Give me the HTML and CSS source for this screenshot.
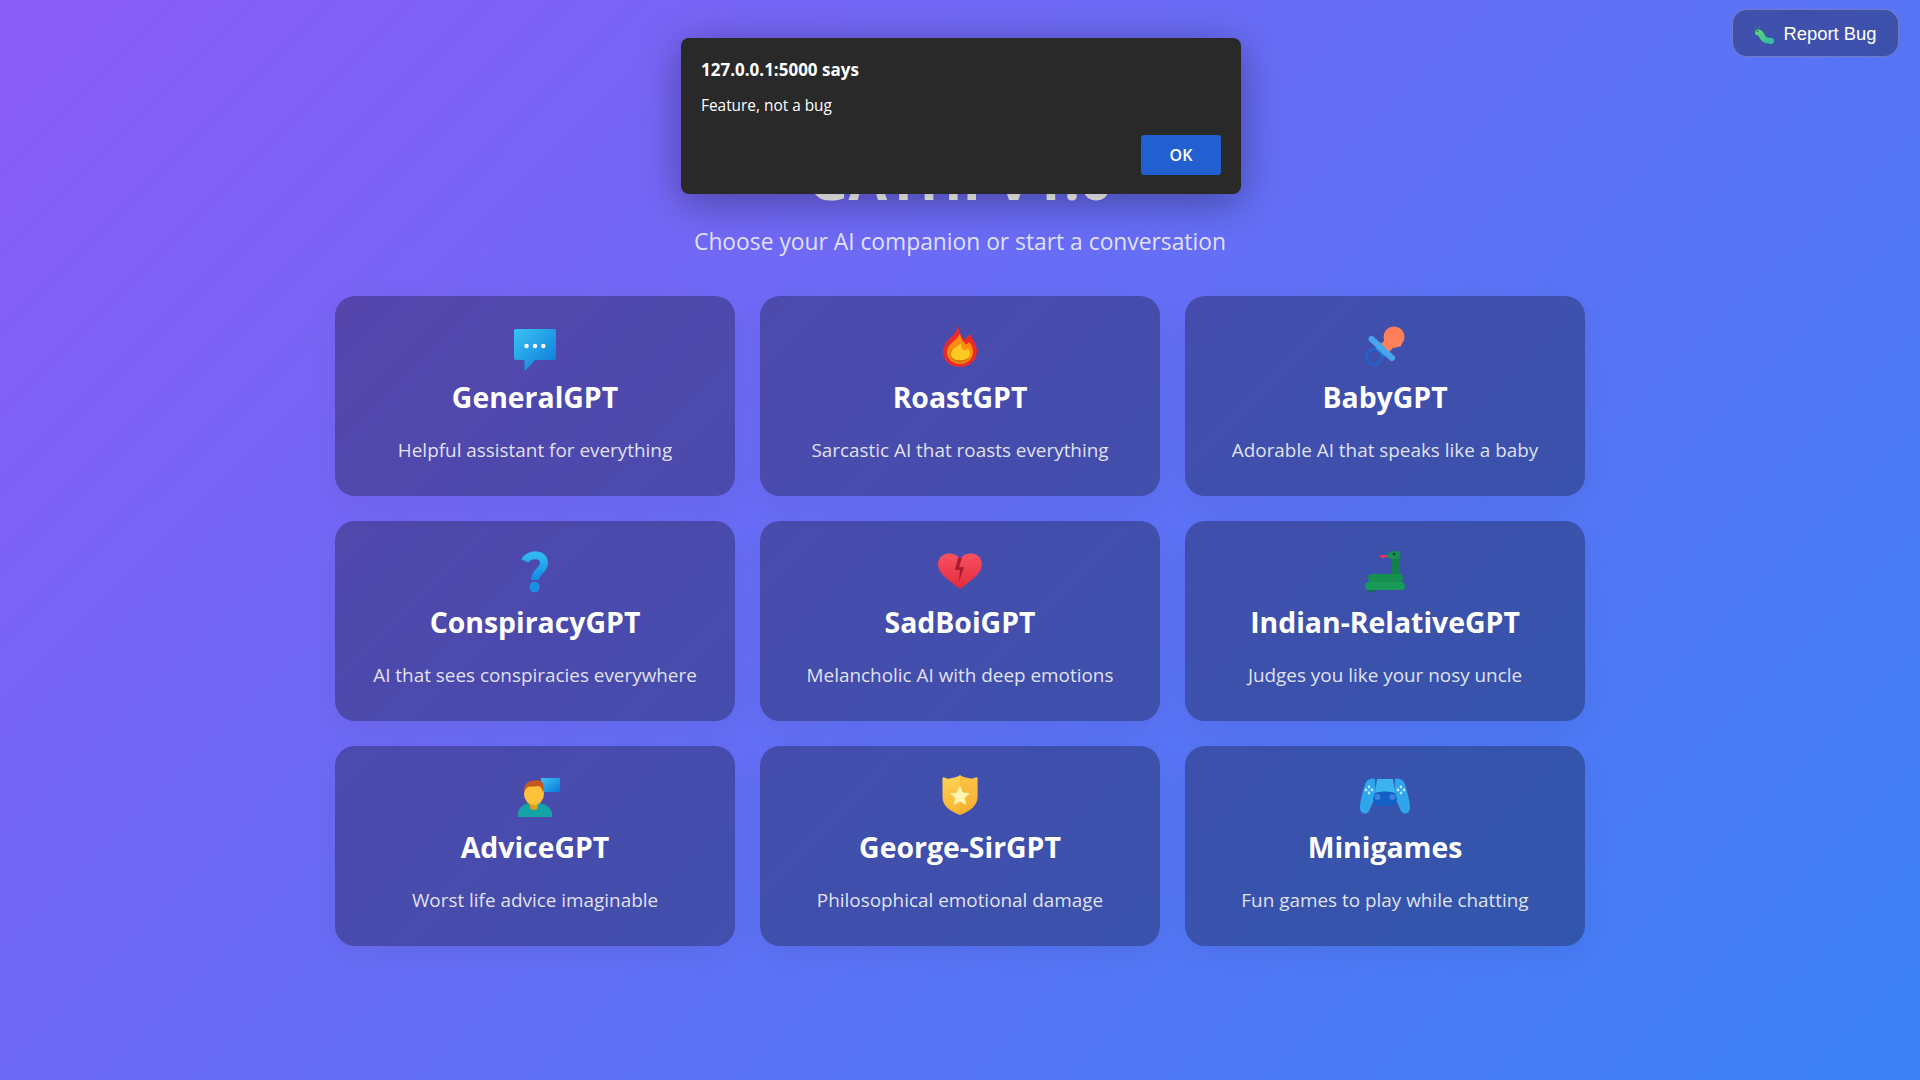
FILE: index.html
```html
<!DOCTYPE html>
<html lang="en">
<head>
<meta charset="utf-8">
<title>GATHI V1.0</title>
<link rel="stylesheet" href="styles.css">
</head>
<body>
<svg class="defs" width="0" height="0" aria-hidden="true">
<defs>
<linearGradient id="gBlue" x1="0" y1="0" x2="1" y2="1"><stop offset="0" stop-color="#3bc3f3"/><stop offset="1" stop-color="#0a78d8"/></linearGradient>
<linearGradient id="gQ" x1="0" y1="0" x2="0" y2="1"><stop offset="0" stop-color="#2fb9f0"/><stop offset="1" stop-color="#1488e0"/></linearGradient>
<linearGradient id="gHeart" x1="0" y1="0" x2="0" y2="1"><stop offset="0" stop-color="#f8515f"/><stop offset="1" stop-color="#e32a3e"/></linearGradient>
<linearGradient id="gShield" x1="0" y1="0" x2="0" y2="1"><stop offset="0" stop-color="#ffd254"/><stop offset="1" stop-color="#f9b432"/></linearGradient>
<linearGradient id="gBug" x1="0" y1="0" x2="1" y2="1"><stop offset="0" stop-color="#5bd17c"/><stop offset="1" stop-color="#2fbf9c"/></linearGradient>
</defs>
</svg>

<button class="report-btn" type="button">
<svg class="bug-icon" viewBox="0 0 20 18"><path d="M1 0l2 3M6 0l-1 3" stroke="#1f8f5a" stroke-width="1" fill="none"/><path d="M4 6.500c4 0 3 4 6 6.500s5 1.500 7 2" stroke="url(#gBug)" stroke-width="6" stroke-linecap="round" fill="none"/><circle cx="3.500" cy="5.500" r="0.800" fill="#1b5e3c"/></svg>
<span>Report Bug</span>
</button>

<div class="alert" role="alertdialog">
<div class="alert-title">127.0.0.1:5000 says</div>
<div class="alert-msg">Feature, not a bug</div>
<div class="alert-actions"><button class="alert-ok" type="button">OK</button></div>
</div>

<main class="page">
<header class="hero">
<h1 class="hero-title">GATHI V1.0</h1>
<p class="hero-sub">Choose your AI companion or start a conversation</p>
</header>
<section class="grid">

<article class="card">
<svg class="emoji" viewBox="0 0 48 48"><path d="M5 3h38a2 2 0 0 1 2 2v27a2 2 0 0 1-2 2H24L14.500 44.500a.6.6 0 0 1-1-.4V34H5a2 2 0 0 1-2-2V5a2 2 0 0 1 2-2z" fill="url(#gBlue)"/><circle cx="15.500" cy="20" r="2.200" fill="#fff"/><circle cx="24" cy="20" r="2.200" fill="#fff"/><circle cx="32.300" cy="20" r="2.200" fill="#fff"/></svg>
<h2 class="card-title">GeneralGPT</h2>
<p class="card-desc">Helpful assistant for everything</p>
</article>

<article class="card">
<svg class="emoji" viewBox="0 0 48 48"><path d="M22 0c2 6 2 9 6 13 1 1 2 0 2-1l3-3 1-1c3 6 7 11 7 17 0 10-8 16-17 16S7 35 7 26c0-5 3-9 6-13 4-4 8-7 9-13z" fill="#e82a2a"/><path d="M24 8c1 5 3 8 6 10 1 .6 2-.6 3-2 3 3 4 7 4 10 0 7-6 12-13 12S11 33 11 26c0-8 9-11 13-18z" fill="#ff8b12"/><path d="M25 17c0 3 1 6 3 7 2 .8 3-1 4-2 1 2 2 3 2 6 0 5-4 9-10 9s-10-4-10-9c0-6 8-7 11-11z" fill="#b96f00" opacity=".6"/><path d="M25 17c0 3 1 6 3 7 2 .8 3-1 4-2 1 2 2 3 2 6 0 4-4 6-10 6s-9-2-9-6c0-6 7-7 10-11z" fill="#fdc921"/></svg>
<h2 class="card-title">RoastGPT</h2>
<p class="card-desc">Sarcastic AI that roasts everything</p>
</article>

<article class="card">
<svg class="emoji" viewBox="0 0 48 48"><circle cx="13" cy="31" r="7.500" fill="none" stroke="#1f66cc" stroke-width="2.500"/><path d="M14 22l6-6 9 9-6 6z" fill="#2e84dc"/><path d="M25 7l16 13-9 2-6 6-8-8 6-6z" fill="#ff8058"/><circle cx="33" cy="11" r="10.500" fill="#ff8058"/><path d="M10.500 13L31 32" stroke="#4aa5ef" stroke-width="6" stroke-linecap="round"/></svg>
<h2 class="card-title">BabyGPT</h2>
<p class="card-desc">Adorable AI that speaks like a baby</p>
</article>

<article class="card">
<svg class="emoji" viewBox="0 0 48 48"><path d="M14 10c3-7 19-9 19 2 0 8-9 8-9 17" fill="none" stroke="url(#gQ)" stroke-width="8" stroke-linejoin="round"/><circle cx="23.500" cy="36" r="5.200" fill="#1a8fe3"/></svg>
<h2 class="card-title">ConspiracyGPT</h2>
<p class="card-desc">AI that sees conspiracies everywhere</p>
</article>

<article class="card">
<svg class="emoji" viewBox="0 0 48 48"><path d="M24 38C12 29 2 22 2 13.500 2 7 7 2.500 13 2.500c5 0 9 2 11 6 2-4 6-6 11-6 6 0 11 4.500 11 11C46 22 36 29 24 38z" fill="url(#gHeart)"/><path d="M22 7l-3 12h5l-1 12 5-15h-5l3-9z" fill="#a81b30"/></svg>
<h2 class="card-title">SadBoiGPT</h2>
<p class="card-desc">Melancholic AI with deep emotions</p>
</article>

<article class="card">
<svg class="emoji" viewBox="0 0 48 48"><path d="M19 4h8v2l-4 .5-1 2-1-2-2-.5z" fill="#d63a5e"/><path d="M34.500 25V6" stroke="#12804a" stroke-width="8" fill="none"/><path d="M26 4C28 0 36-1 38.500 1c2 2 1 6-1 7h-6c-3 0-6-1-5.500-4z" fill="#169054"/><circle cx="33" cy="3" r="1.300" fill="#10482c"/><rect x="7" y="23" width="35" height="8" rx="4" fill="#15904f"/><path d="M10 38l-5 3.500 10-1.500z" fill="#0e7040"/><rect x="4" y="31" width="40" height="8" rx="4" fill="#1a9a58"/></svg>
<h2 class="card-title">Indian-RelativeGPT</h2>
<p class="card-desc">Judges you like your nosy uncle</p>
</article>

<article class="card">
<svg class="emoji" viewBox="0 0 48 48"><path d="M30 2h18a1 1 0 0 1 1 1v12a1 1 0 0 1-1 1H30z" fill="url(#gBlue)"/><path d="M7 41v-3c0-6 6-11 12-11h8c7 0 14 5 14 11v3z" fill="#16a3a5"/><path d="M19 24h8v6a4 4 0 0 1-8 0z" fill="#e89a1c"/><ellipse cx="23" cy="18" rx="10" ry="11" fill="#fdc13a"/><path d="M13 16c0-7 3-11 8-11 4-1.500 9-1 10 1 2 3 2 6 1 10-1-3-2-6-5-6-3 1-8 0-10 1-2 1-3 3-4 5z" fill="#c8561f"/></svg>
<h2 class="card-title">AdviceGPT</h2>
<p class="card-desc">Worst life advice imaginable</p>
</article>

<article class="card">
<svg class="emoji" viewBox="0 0 48 48"><path d="M8 1c2 2 5 2 8 1 3-.5 6-1 8-3 2 2 5 2.500 8 3 3 1 6 1 8-1 1 0 1.500 1 1.500 2v18c0 9-8 14-17.500 18C14 35 6.500 30 6.500 21V3c0-1 .5-2 1.500-2z" fill="url(#gShield)"/><path d="M24-1c2 2 5 2.500 8 3 3 1 6 1 8-1 1 0 1.500 1 1.500 2v18c0 9-8 14-17.500 18z" fill="#f3a72a" opacity=".35"/><path d="M24 10l3 6.500 7 .8-5.200 4.800 1.400 7L24 25.500l-6.200 3.600 1.400-7L14 17.300l7-.8z" fill="#fff3b0"/></svg>
<h2 class="card-title">George-SirGPT</h2>
<p class="card-desc">Philosophical emotional damage</p>
</article>

<article class="card">
<svg class="emoji" viewBox="0 0 48 48"><path d="M13 2.500c-5 0-8 2-9 6-2 6-5 17-5 23 0 5 3 6 5 6 3 0 4-2 6-7 1-3 4-7 5-12l-1-14c0-1 0-2-1-2z" fill="#2ea6ec"/><path d="M35 2.500c5 0 8 2 9 6 2 6 5 17 5 23 0 5-3 6-5 6-3 0-4-2-6-7-1-3-4-7-5-12l1-14c0-1 0-2 1-2z" fill="#2ea6ec"/><path d="M16 3h16l2 14H14z" fill="#3bb4f0"/><path d="M14 17c6-2 14-2 20 0l2 6-3 7H15l-3-7z" fill="#1560c4"/><circle cx="16.500" cy="21" r="2.900" fill="#3e83dc"/><circle cx="31.500" cy="21" r="2.900" fill="#3e83dc"/><g fill="#bfe6fb"><circle cx="8" cy="11" r="1.400"/><circle cx="5" cy="14" r="1.400"/><circle cx="11" cy="14" r="1.400"/><circle cx="8" cy="17" r="1.400"/><circle cx="40" cy="11" r="1.400"/><circle cx="37" cy="14" r="1.400"/><circle cx="43" cy="14" r="1.400"/><circle cx="40" cy="17" r="1.400"/></g></svg>
<h2 class="card-title">Minigames</h2>
<p class="card-desc">Fun games to play while chatting</p>
</article>

</section>
</main>
</body>
</html>
```
FILE: styles.css
```css
* { box-sizing: border-box; }
html, body { margin: 0; height: 100%; }
body {
  min-height: 100vh;
  overflow: hidden;
  background: linear-gradient(135deg, #8b5cf6 0%, #3b82f6 100%);
  font-family: "Open Sans", "Noto Sans", sans-serif;
  color: #fff;
}
.defs { position: absolute; }
.page {
  display: flex;
  flex-direction: column;
  align-items: center;
  padding-top: 140px;
}
.hero { text-align: center; margin-bottom: 39px; }
.hero-title {
  margin: 0;
  font-size: 56px;
  line-height: 76px;
  font-weight: 700;
  color: #fff;
}
.hero-sub {
  margin: 11px 0 0;
  font-size: 22.800px;
  line-height: 30px;
  color: rgba(255,255,255,.82);
}
.grid {
  display: grid;
  grid-template-columns: repeat(3, 400px);
  grid-auto-rows: 200px;
  gap: 25px;
}
.card {
  display: flex;
  flex-direction: column;
  align-items: center;
  padding-top: 30px;
  border-radius: 20px;
  background: rgba(0,0,0,.3);
  box-shadow: 0 8px 32px rgba(0,0,0,.06);
}
.emoji { width: 48px; height: 48px; overflow: visible; display: block; flex: none; }
.card-title {
  margin: 3.500px 0 0;
  font-size: 28.400px;
  line-height: 38px;
  font-weight: 700;
}
.card-desc {
  margin: 21px 0 0;
  font-size: 18.900px;
  line-height: 26px;
  color: rgba(255,255,255,.85);
}
.report-btn {
  position: absolute;
  top: 9px;
  right: 21px;
  width: 167px;
  height: 48px;
  display: flex;
  align-items: center;
  justify-content: center;
  gap: 9px;
  padding: 1px 0 0;
  border: 1px solid rgba(255,255,255,.25);
  border-radius: 15px;
  background: rgba(0,0,0,.3);
  color: #fff;
  font-family: "Liberation Sans", Arial, sans-serif;
  font-size: 18.400px;
}
.bug-icon { width: 20px; height: 18px; display: block; overflow: visible; margin-top: 2px; }
.alert {
  position: absolute;
  top: 38px;
  left: 681px;
  width: 560px;
  height: 156px;
  padding: 21px 20px 19px 20px;
  background: #292929;
  border-radius: 8px;
  box-shadow: 0 8px 40px rgba(0,0,0,.35);
  z-index: 5;
  display: flex;
  flex-direction: column;
}
.alert-title { font-size: 17px; line-height: 22px; font-weight: 700; }
.alert-msg { margin-top: 15px; font-size: 15.400px; line-height: 20px; }
.alert-actions { margin-top: auto; display: flex; justify-content: flex-end; }
.alert-ok {
  width: 80px;
  height: 40px;
  border: 0;
  border-radius: 3px;
  background: #2260d1;
  color: #fff;
  font-family: inherit;
  font-size: 16px;
  font-weight: 600;
}
```
